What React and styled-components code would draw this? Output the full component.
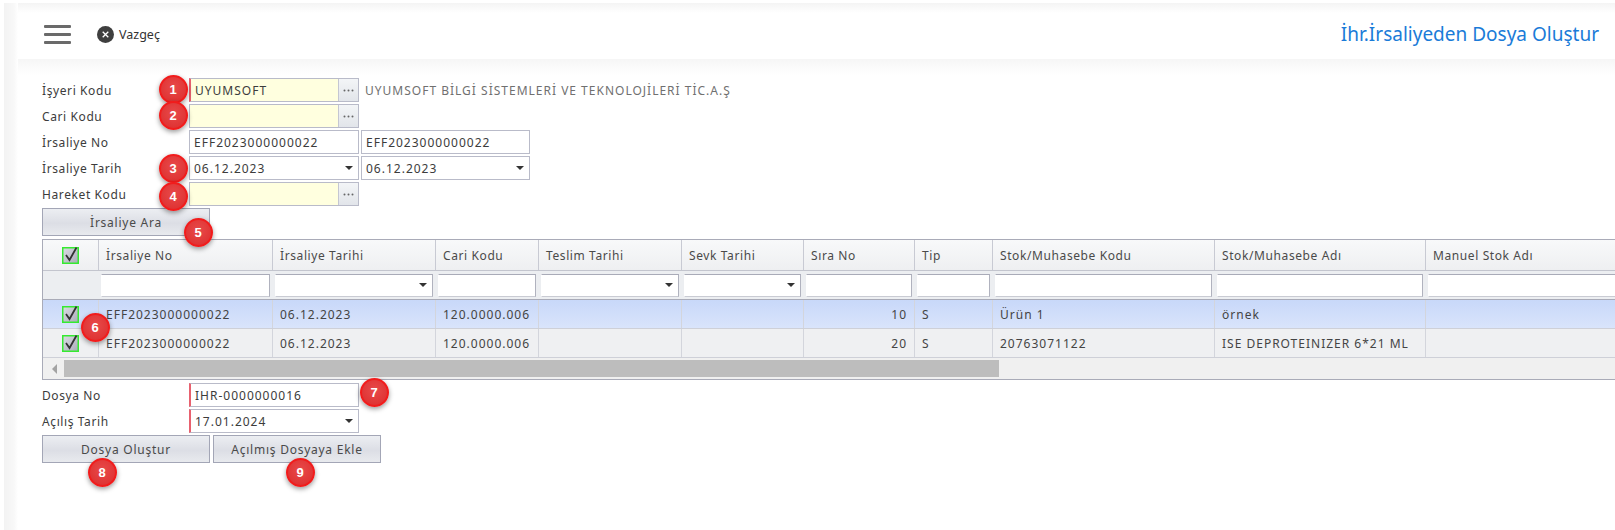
import React from 'react';
import styled, { createGlobalStyle } from 'styled-components';

const GlobalStyle = createGlobalStyle`
  html, body { margin: 0; padding: 0; background: #fff; }
  * { box-sizing: border-box; }
`;

const COLUMNS = '56px 174px 163px 103px 143px 122px 111px 78px 222px 211px 240px';

const Page = styled.div`
  position: relative;
  width: 1615px;
  height: 530px;
  overflow: hidden;
  padding: 3px 0 0 4px;
  background: #fff;
  font-family: "Noto Sans", "Open Sans", sans-serif;
  font-size: 12px;
  letter-spacing: 0.6px;
  color: #444;
`;

const Shell = styled.div`
  height: 527px;
  padding-left: 14px;
  background: linear-gradient(90deg, #f3f3f3 0, #f8f8f8 10px, #fff 14px);
`;

const Main = styled.div`
  height: 100%;
  background: linear-gradient(180deg, #fff 0, #fff 56px, #f6f6f6 56px, #fff 72px);
`;

const Header = styled.header`
  display: flex;
  align-items: center;
  height: 56px;
  padding: 6px 16px 0 26px;
  background: linear-gradient(180deg, #f4f4f4 0, #fff 10px);
`;

const Burger = styled.div`
  display: flex;
  flex-direction: column;
  gap: 5px;
  width: 27px;
  margin-right: 26px;

  span {
    display: block;
    height: 3px;
    background: #6a6a6a;
    border-radius: 1px;
  }
`;

const BackButton = styled.div`
  display: flex;
  align-items: center;
  gap: 5px;
  font-size: 12.5px;
  letter-spacing: 0;
  color: #333;
`;

const Title = styled.h1`
  margin: 0 0 0 auto;
  font-size: 19px;
  font-weight: 400;
  letter-spacing: 0;
  color: #1a7bd8;
`;

const Content = styled.div`
  padding: 19px 0 0 24px;
`;

const Row = styled.div`
  display: flex;
  align-items: center;
  height: 24px;
  margin-bottom: 2px;
`;

const Label = styled.label`
  width: 147px;
  flex: none;
  color: #3c3c3c;
`;

const Field = styled.div`
  display: flex;
  align-items: center;
  width: ${p => p.$width || 170}px;
  height: 24px;
  padding-left: 4px;
  margin-right: 2px;
  background: ${p => (p.$yellow ? '#ffffdf' : '#fff')};
  border: 1px solid #b9bbc9;
  border-left: ${p => (p.$required ? '2px solid #e8616f' : '1px solid #b9bbc9')};
  letter-spacing: 1px;
  color: #3c3c3c;
`;

const FieldText = styled.span`
  flex: 1;
  white-space: nowrap;
`;

const DotsButton = styled.div`
  display: flex;
  align-items: center;
  justify-content: center;
  width: 20px;
  height: 22px;
  border-left: 1px solid #c4c6d2;
  background: linear-gradient(180deg, #f3f5f7, #e2e5ea);

  svg { display: block; }
`;

const Description = styled.span`
  margin-left: 4px;
  letter-spacing: 1px;
  color: #707070;
  white-space: nowrap;
`;

const ActionRow = styled.div`
  display: flex;
  gap: 3px;
`;

const Button = styled.div`
  display: flex;
  align-items: center;
  justify-content: center;
  width: ${p => p.$width || 168}px;
  height: 28px;
  background: linear-gradient(180deg, #eceef2, #dcdee5 55%, #e8eaee);
  border: 1px solid #a3a6b6;
  letter-spacing: 0.75px;
  color: #4a4a4a;
`;

const Grid = styled.div`
  width: 1600px;
  margin: 3px 0 3px;
  border: 1px solid #a9abb8;
  border-right: 0;
`;

const GridRow = styled.div`
  display: grid;
  grid-template-columns: ${COLUMNS};
  height: ${p => p.$height}px;
  border-bottom: 1px solid ${p => p.$line || '#ced0d8'};
  background: ${p => p.$bg};
`;

const Cell = styled.div`
  display: flex;
  align-items: center;
  justify-content: ${p => (p.$right ? 'flex-end' : p.$center ? 'center' : 'flex-start')};
  padding: ${p => (p.$center ? '0' : '0 7px')};
  border-right: 1px solid #d3d5dc;
  letter-spacing: 1px;
  white-space: nowrap;
  overflow: hidden;
`;

const HeadCell = styled(Cell)`
  border-right-color: #c8cad3;
  letter-spacing: 0.6px;
  color: #4a4a4a;
`;

const FilterCell = styled.div`
  display: flex;
  align-items: center;
  padding: 0 3px 0 2px;
`;

const FilterBox = styled.div`
  display: flex;
  align-items: center;
  justify-content: flex-end;
  width: 100%;
  height: 23px;
  padding-right: 5px;
  background: #fff;
  border: 1px solid #fff;
  border-top-color: #a9abb8;
  border-right-color: #b0b2be;
  border-bottom-color: #c9cbd3;
`;

const Arrow = styled.span`
  width: 0;
  height: 0;
  margin-right: ${p => p.$gap || 0}px;
  border-left: 4px solid transparent;
  border-right: 4px solid transparent;
  border-top: 4px solid #333;
`;

const ScrollBar = styled.div`
  display: flex;
  align-items: center;
  height: 21px;
  background: #f0f0f0;
`;

const ScrollArrow = styled.span`
  width: 0;
  height: 0;
  margin: 0 7px 0 9px;
  border-top: 5px solid transparent;
  border-bottom: 5px solid transparent;
  border-right: 5px solid #a3a3a3;
`;

const ScrollThumb = styled.div`
  width: 935px;
  height: 17px;
  background: #bdbdbd;
`;

const Badge = styled.span`
  position: absolute;
  left: ${p => p.$x - 14.5}px;
  top: ${p => p.$y - 14.5}px;
  display: flex;
  align-items: center;
  justify-content: center;
  width: 29px;
  height: 29px;
  border: 2px solid #f11c1c;
  border-radius: 50%;
  background: radial-gradient(circle at 50% 40%, #e84a4a, #dc2c2c);
  box-shadow: 0 2px 5px rgba(0, 0, 0, 0.4);
  font-family: "Liberation Sans", sans-serif;
  font-size: 13px;
  font-weight: 700;
  letter-spacing: 0;
  color: #fff;
`;

const Dots = () => (
  <svg width="11" height="3" viewBox="0 0 11 3">
    <circle cx="1.5" cy="1.5" r="1" fill="#666" />
    <circle cx="5.5" cy="1.5" r="1" fill="#666" />
    <circle cx="9.5" cy="1.5" r="1" fill="#666" />
  </svg>
);

const Check = () => (
  <svg width="17" height="18" viewBox="0 0 17 18" style={{ display: 'block' }}>
    <defs>
      <linearGradient id="boxFill" x1="0" y1="0" x2="1" y2="1">
        <stop offset="0" stopColor="#dcdce4" />
        <stop offset="1" stopColor="#a9aab8" />
      </linearGradient>
    </defs>
    <rect x="0.75" y="1.75" width="15.5" height="15.5" fill="url(#boxFill)" stroke="#35ea30" strokeWidth="1.5" />
    <path d="M4 9 L7.5 14 L14.5 1.5" fill="none" stroke="#333" strokeWidth="1.8" />
  </svg>
);

const CloseIcon = () => (
  <svg width="17" height="17" viewBox="0 0 17 17">
    <circle cx="8.5" cy="8.5" r="8.5" fill="#3f3f3f" />
    <path d="M5.7 5.7 L11.3 11.3 M11.3 5.7 L5.7 11.3" stroke="#fff" strokeWidth="1.3" />
  </svg>
);

const headers = ['İrsaliye No', 'İrsaliye Tarihi', 'Cari Kodu', 'Teslim Tarihi', 'Sevk Tarihi', 'Sıra No', 'Tip', 'Stok/Muhasebe Kodu', 'Stok/Muhasebe Adı', 'Manuel Stok Adı'];
const filterHasArrow = [false, true, false, true, true, false, false, false, false, false];

const rows = [
  { sira: '10', code: 'Ürün 1', name: 'örnek', bg: 'linear-gradient(180deg, #c8d8f9, #d9e4fb)' },
  { sira: '20', code: '20763071122', name: 'ISE DEPROTEINIZER 6*21 ML', bg: '#eff0f2' },
];

const badges = [
  [1, 173, 89], [2, 173, 115], [3, 173, 168], [4, 173, 196], [5, 198, 232],
  [6, 95, 327], [7, 374, 392], [8, 102, 472], [9, 300, 472],
];

const App = () => (
  <Page>
    <GlobalStyle />
    <Shell>
      <Main>
        <Header>
          <Burger><span /><span /><span /></Burger>
          <BackButton><CloseIcon />Vazgeç</BackButton>
          <Title>İhr.İrsaliyeden Dosya Oluştur</Title>
        </Header>

        <Content>
          <Row>
            <Label>İşyeri Kodu</Label>
            <Field $yellow $required>
              <FieldText>UYUMSOFT</FieldText>
              <DotsButton><Dots /></DotsButton>
            </Field>
            <Description>UYUMSOFT BİLGİ SİSTEMLERİ VE TEKNOLOJİLERİ TİC.A.Ş</Description>
          </Row>
          <Row>
            <Label>Cari Kodu</Label>
            <Field $yellow>
              <FieldText />
              <DotsButton><Dots /></DotsButton>
            </Field>
          </Row>
          <Row>
            <Label>İrsaliye No</Label>
            <Field><FieldText>EFF2023000000022</FieldText></Field>
            <Field $width={169}><FieldText>EFF2023000000022</FieldText></Field>
          </Row>
          <Row>
            <Label>İrsaliye Tarih</Label>
            <Field>
              <FieldText>06.12.2023</FieldText>
              <Arrow $gap={5} />
            </Field>
            <Field $width={169}>
              <FieldText>06.12.2023</FieldText>
              <Arrow $gap={5} />
            </Field>
          </Row>
          <Row>
            <Label>Hareket Kodu</Label>
            <Field $yellow>
              <FieldText />
              <DotsButton><Dots /></DotsButton>
            </Field>
          </Row>

          <Button>İrsaliye Ara</Button>

          <Grid>
            <GridRow $height={31} $line="#c3c5ce" $bg="linear-gradient(180deg, #f8f9fa, #eeeff1)">
              <HeadCell $center><Check /></HeadCell>
              {headers.map(h => <HeadCell key={h}>{h}</HeadCell>)}
            </GridRow>
            <GridRow $height={29} $line="#a9abb8" $bg="#eceef1">
              <FilterCell />
              {filterHasArrow.map((hasArrow, i) => (
                <FilterCell key={i}>
                  <FilterBox>{hasArrow && <Arrow />}</FilterBox>
                </FilterCell>
              ))}
            </GridRow>
            {rows.map(row => (
              <GridRow key={row.sira} $height={29} $bg={row.bg}>
                <Cell $center><Check /></Cell>
                <Cell>EFF2023000000022</Cell>
                <Cell>06.12.2023</Cell>
                <Cell>120.0000.006</Cell>
                <Cell />
                <Cell />
                <Cell $right>{row.sira}</Cell>
                <Cell>S</Cell>
                <Cell>{row.code}</Cell>
                <Cell>{row.name}</Cell>
                <Cell />
              </GridRow>
            ))}
            <ScrollBar>
              <ScrollArrow />
              <ScrollThumb />
            </ScrollBar>
          </Grid>

          <Row>
            <Label>Dosya No</Label>
            <Field $required><FieldText>IHR-0000000016</FieldText></Field>
          </Row>
          <Row>
            <Label>Açılış Tarih</Label>
            <Field $required>
              <FieldText>17.01.2024</FieldText>
              <Arrow $gap={5} />
            </Field>
          </Row>
          <ActionRow>
            <Button>Dosya Oluştur</Button>
            <Button>Açılmış Dosyaya Ekle</Button>
          </ActionRow>
        </Content>
      </Main>
    </Shell>

    {badges.map(([n, x, y]) => <Badge key={n} $x={x} $y={y}>{n}</Badge>)}
  </Page>
);

export default App;
